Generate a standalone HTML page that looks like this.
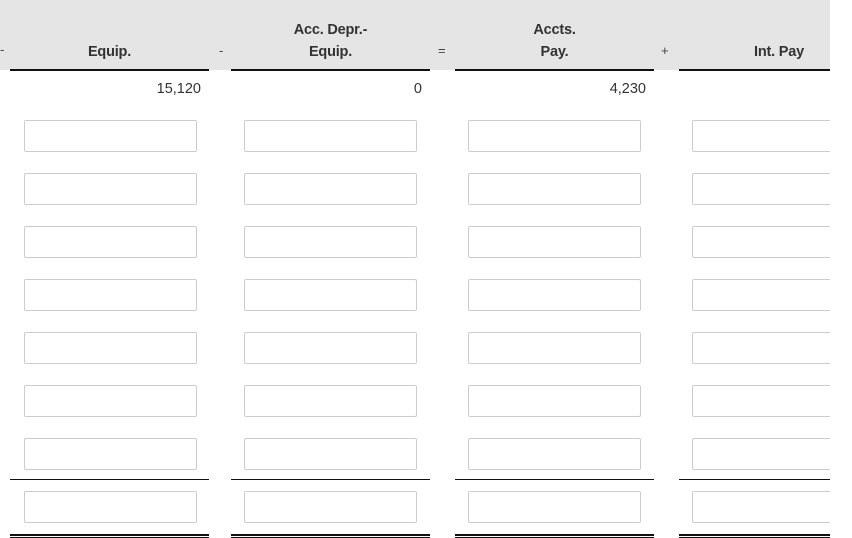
<!DOCTYPE html>
<html><head><style>
body{margin:0;width:852px;height:538px;background:#fff;font-family:"Liberation Sans",sans-serif;color:#333;position:relative;overflow:hidden}
.hdr{position:absolute;left:0;top:0;width:830px;height:70px;background:#e5e5e5}
.t{position:absolute;font-size:14.5px;text-align:center;font-weight:bold;color:#333;line-height:22px;letter-spacing:-0.2px}
.op{position:absolute;font-size:13px;color:#444}
.ln{position:absolute;height:2px;background:#111}
.v{position:absolute;font-size:14.5px;text-align:right;top:81px}
.in{position:absolute;height:32px;border:1px solid #ccc;border-radius:2px;background:#fff;box-sizing:border-box}
.dl{position:absolute;height:4px;border-top:2px solid #111;border-bottom:1px solid #111;box-sizing:border-box;top:534px}
#rows{position:absolute;left:0;top:0;width:830px;height:538px;overflow:hidden}
</style></head><body>
<div class="hdr"></div>
<div class="t" style="left:10px;width:199px;top:41px">Equip.</div>
<div class="t" style="left:231px;width:199px;top:19px">Acc. Depr.-<br>Equip.</div>
<div class="t" style="left:455px;width:199px;top:19px">Accts.<br>Pay.</div>
<div class="t" style="left:679px;width:200px;top:41px">Int. Pay</div>
<div class="op" style="left:0px;top:42px">-</div>
<div class="op" style="left:219px;top:43px">-</div>
<div class="op" style="left:438px;top:43px">=</div>
<div class="op" style="left:661px;top:43px">+</div>
<div class="ln" style="left:10px;width:199px;top:69px"></div>
<div class="ln" style="left:231px;width:199px;top:69px"></div>
<div class="ln" style="left:455px;width:199px;top:69px"></div>
<div class="ln" style="left:679px;width:151px;top:69px"></div>
<div class="v" style="left:10px;width:191px">15,120</div>
<div class="v" style="left:231px;width:191px">0</div>
<div class="v" style="left:455px;width:191px">4,230</div>
<div id="rows"></div>
<script>
var xs=[[24,173],[244,173],[468,173],[692,173]];var ys=[120,173,226,279,332,385,438,491];var h='';
ys.forEach(function(y){xs.forEach(function(x){h+='<div class="in" style="left:'+x[0]+'px;width:'+x[1]+'px;top:'+y+'px"></div>';});});
[[10,199],[231,199],[455,199],[679,151]].forEach(function(c){h+='<div class="ln" style="left:'+c[0]+'px;width:'+c[1]+'px;top:479px;height:1px"></div>';h+='<div class="dl" style="left:'+c[0]+'px;width:'+c[1]+'px"></div>';});
document.getElementById('rows').innerHTML=h;
</script>
</body></html>
